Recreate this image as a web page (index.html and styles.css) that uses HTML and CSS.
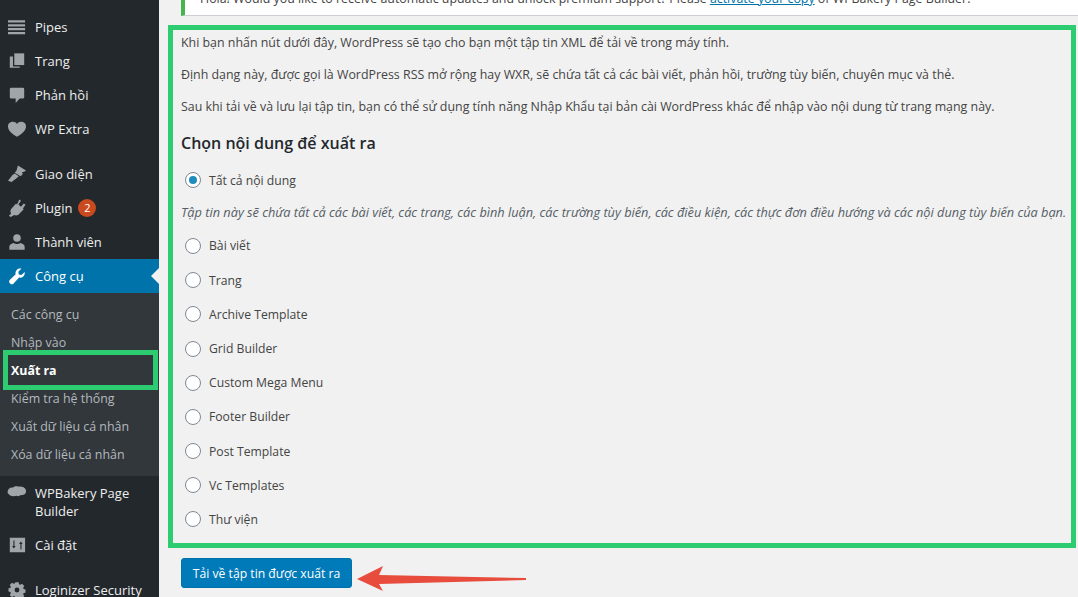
FILE: index.html
```html
<!DOCTYPE html>
<html lang="vi">
<head>
    <meta charset="UTF-8">
    <title>Xuất ra</title>
    <link rel="stylesheet" href="styles.css">
</head>
<body>
<div class="page">
    <nav class="sidebar">
        <a class="menu-item">
            <svg class="menu-icon" viewBox="0 0 20 20"><path d="M5 0h5v3H5zM14 0h5v3h-5z" transform="translate(0 5)"/></svg>
        </a>
        <a class="menu-item">
            <svg class="menu-icon" viewBox="0 0 20 20"><path d="M0 2.500h19v2.500H0zM0 7h19v2.500H0zM0 11h19v2.500H0zM0 15.500h19V18H0z"/></svg>
            <span>Pipes</span>
        </a>
        <a class="menu-item">
            <svg class="menu-icon" viewBox="0 0 20 20"><path d="M7 1.500h11v13H7z"/><path d="M5.500 5v11H13v1.500H2V5z"/></svg>
            <span>Trang</span>
        </a>
        <a class="menu-item">
            <svg class="menu-icon" viewBox="0 0 20 20"><path d="M3.500 2h13A1.500 1.500 0 0 1 18 3.500v9a1.500 1.500 0 0 1-1.500 1.500H13l-4.500 5v-5h-5A1.500 1.500 0 0 1 2 12.500v-9A1.500 1.500 0 0 1 3.500 2z"/></svg>
            <span>Phản hồi</span>
        </a>
        <a class="menu-item">
            <svg class="menu-icon" viewBox="0 0 20 20"><path d="M10 18.500C5 16 0 12 0 7 0 3.800 2.500 2 5.500 2 7.500 2 9 3 10 4.500 11 3 12.500 2 14.500 2 17.500 2 20 3.800 20 7c0 5-5 9-10 11.500z"/></svg>
            <span>WP Extra</span>
        </a>
        <div class="menu-sep"></div>
        <a class="menu-item">
            <svg class="menu-icon" viewBox="0 0 20 20"><path d="M11 .5l9 5.500-2 1.500-2.500.5 1 2-2.500 2.500-6.500-4L9.500 6zM7.500 9.500l4.500 3-1.500 1.500-6.500 5L0 17.500 5 11z"/></svg>
            <span>Giao diện</span>
        </a>
        <a class="menu-item">
            <svg class="menu-icon" viewBox="0 0 20 20"><path d="M12.500 .5l2 1.500-3 4 3 2.500 3-3.500 2 1.500-3 4 1 1-6 6c-1.500 1-3.500 1-4.500.3L3 20l-2-1.500 2.500-2.500C2.500 14.500 2.500 12.500 3.500 11L9 5l1 1z"/></svg>
            <span>Plugin</span>
            <span class="badge">2</span>
        </a>
        <a class="menu-item">
            <svg class="menu-icon" viewBox="0 0 20 20"><circle cx="10" cy="5.500" r="4.200"/><path d="M1.500 18.500v-3.500c0-2 2.500-3.500 5-4 1.500 1.500 5.500 1.500 7 0 2.500.5 5 2 5 4v3.500z"/></svg>
            <span>Thành viên</span>
        </a>
        <a class="menu-item active">
            <svg class="menu-icon" viewBox="0 0 20 20"><path d="M18.500 5.500c.4 2-.2 3.800-1.500 5-1.300 1.200-3 1.600-4.700 1.200L6 18.500c-.9.900-2.500.9-3.400 0l-.7-.7c-.9-.9-.9-2.500 0-3.400L8.500 8c-.5-1.800 0-3.500 1.200-4.800C11 1.900 13 1.300 15 1.800l-3.500 3.500.5 3 3 .5z"/></svg>
            <span>Công cụ</span>
        </a>
        <ul class="submenu">
            <li>Các công cụ</li>
            <li>Nhập vào</li>
            <li class="current">Xuất ra<span class="mark-box"></span></li>
            <li>Kiểm tra hệ thống</li>
            <li>Xuất dữ liệu cá nhân</li>
            <li>Xóa dữ liệu cá nhân</li>
        </ul>
        <a class="menu-item tall">
            <svg class="menu-icon bakery" viewBox="0 0 20 20"><path d="M-.500 9c0-3.500 3-5.500 6-5 1.500-1.500 4.500-2 6.500-1 2-.8 5.500 0 7 2 1.500 2 1.500 5-.5 6.500-1 .8-3 1-4.500.8-1 1.200-3 1.700-4.500.7-2 .8-5.500.8-7.500-.5C1 11.500-.500 10.500-.500 9z"/></svg>
            <span>WPBakery Page Builder</span>
        </a>
        <a class="menu-item">
            <svg class="menu-icon" viewBox="0 0 20 20"><path fill-rule="evenodd" d="M2 2h17v16H2zM6 5v6H4.500l2 3 2-3H7.200V5zM13.800 15V9h-1.500l2-3 2 3h-1.300v6z"/></svg>
            <span>Cài đặt</span>
        </a>
        <div class="menu-sep"></div>
        <a class="menu-item">
            <svg class="menu-icon" viewBox="0 0 20 20"><path fill-rule="evenodd" d="M8 1h4l.5 2.500 1.500.7 2.200-1.400 2.800 2.800-1.400 2.200.6 1.500 2.300.6v4l-2.300.5-.6 1.500 1.400 2.200-2.800 2.800-2.200-1.400-1.500.6L12 21H8l-.5-2.300-1.500-.6-2.200 1.400L1 16.700l1.400-2.200-.6-1.500L-.5 12.500v-4L1.800 8l.6-1.500L1 4.300l2.800-2.800L6 2.900l1.500-.6zM10 7.500a3 3 0 1 0 0 6 3 3 0 0 0 0-6z" transform="translate(1 .5) scale(.9)"/></svg>
            <span>Loginizer Security</span>
        </a>
    </nav>

    <main class="content">
        <div class="notice">
            <p>Hola! Would you like to receive automatic updates and unlock premium support? Please <a href="#">activate your copy</a> of WPBakery Page Builder.</p>
        </div>

        <div class="export-box">
            <p>Khi bạn nhấn nút dưới đây, WordPress sẽ tạo cho bạn một tập tin XML để tải về trong máy tính.</p>
            <p>Định dạng này, được gọi là WordPress RSS mở rộng hay WXR, sẽ chứa tất cả các bài viết, phản hồi, trường tùy biến, chuyên mục và thẻ.</p>
            <p>Sau khi tải về và lưu lại tập tin, bạn có thể sử dụng tính năng Nhập Khẩu tại bản cài WordPress khác để nhập vào nội dung từ trang mạng này.</p>
            <h2>Chọn nội dung để xuất ra</h2>
            <label class="choice"><span class="radio checked"></span>Tất cả nội dung</label>
            <p class="description">Tập tin này sẽ chứa tất cả các bài viết, các trang, các bình luận, các trường tùy biến, các điều kiện, các thực đơn điều hướng và các nội dung tùy biến của bạn.</p>
            <label class="choice"><span class="radio"></span>Bài viết</label>
            <label class="choice"><span class="radio"></span>Trang</label>
            <label class="choice"><span class="radio"></span>Archive Template</label>
            <label class="choice"><span class="radio"></span>Grid Builder</label>
            <label class="choice"><span class="radio"></span>Custom Mega Menu</label>
            <label class="choice"><span class="radio"></span>Footer Builder</label>
            <label class="choice"><span class="radio"></span>Post Template</label>
            <label class="choice"><span class="radio"></span>Vc Templates</label>
            <label class="choice"><span class="radio"></span>Thư viện</label>
        </div>

        <div class="submit-row">
            <button class="button-primary">Tải về tập tin được xuất ra</button>
            <svg class="arrow" width="170" height="34" viewBox="0 0 170 34"><path d="M0 21 L26 8 L22 17 L169 20 L169 22 L22 26 L26 33 Z"/></svg>
        </div>
    </main>
</div>
</body>
</html>
```

FILE: styles.css
```css
* {
    margin: 0;
    padding: 0;
    box-sizing: border-box;
}

html, body {
    height: 597px;
    overflow: hidden;
    background: #f1f1f1;
}

body {
    font-family: "Open Sans", "Noto Sans", sans-serif;
    font-size: 12.4px;
    color: #444;
}

.page {
    display: flex;
    margin-top: -24px;
}

/* Sidebar */
.sidebar {
    flex: 0 0 159px;
    background: #23282d;
    color: #eee;
}

.menu-item {
    display: flex;
    align-items: center;
    height: 34px;
    padding-left: 8px;
    font-size: 13px;
}

.menu-item.tall {
    height: 52px;
    line-height: 18px;
}

.menu-icon {
    flex: 0 0 18px;
    width: 18px;
    height: 18px;
    margin-right: 9px;
    fill: #a0a5aa;
    overflow: visible;
}

.menu-icon.bakery {
    align-self: flex-start;
    margin-top: 8px;
}

.menu-sep {
    height: 11px;
}

.menu-item.active {
    position: relative;
    background: #0073aa;
    color: #fff;
}

.menu-item.active .menu-icon {
    fill: #fff;
}

.menu-item.active::after {
    content: "";
    position: absolute;
    right: 0;
    top: 9px;
    border: 8px solid transparent;
    border-right-color: #f1f1f1;
}

.badge {
    width: 18px;
    height: 18px;
    margin-left: 6px;
    border-radius: 50%;
    background: #ca4a1f;
    color: #fff;
    font-size: 11px;
    line-height: 18px;
    text-align: center;
}

.submenu {
    list-style: none;
    padding: 8px 0 7px;
    background: #32373c;
    color: #b4b9be;
}

.submenu li {
    position: relative;
    height: 28px;
    padding-left: 11px;
    line-height: 28px;
}

.submenu .current {
    color: #fff;
    font-weight: 700;
}

/* green annotation round the current item */
.mark-box {
    position: absolute;
    left: 3px;
    right: 1px;
    top: -7px;
    bottom: -5px;
    border: 5px solid #2ecc71;
}

/* Main column */
.content {
    flex: 1;
    min-width: 0;
    padding: 24px 2px 0 9px;
}

.notice {
    height: 16px;
    margin-left: 13px;
    margin-right: -2px;
    padding-left: 15px;
    overflow: hidden;
    background: #fff;
    border-left: 4px solid #46b450;
    border-bottom: 1px solid #ccd0d4;
}

.notice p {
    margin-top: -10px;
    line-height: 18px;
}

.notice a {
    color: #0073aa;
}

.export-box {
    height: 523px;
    margin-top: 9px;
    padding: 4px 0 0 8px;
    border: 5px solid #2ecc71;
}

.export-box > p {
    margin-bottom: 14px;
    line-height: 18px;
}

.export-box h2 {
    margin-top: 15px;
    margin-bottom: 8px;
    font-size: 16px;
    font-weight: 600;
    line-height: 24px;
    color: #23282d;
}

.choice {
    display: flex;
    align-items: center;
    height: 34.2px;
    font-size: 12.2px;
}

.radio {
    width: 16px;
    height: 16px;
    margin: 0 8px 0 4px;
    border: 1px solid #7e8993;
    border-radius: 50%;
    background: #fff;
}

.radio.checked {
    display: flex;
    align-items: center;
    justify-content: center;
}

.radio.checked::before {
    content: "";
    width: 8px;
    height: 8px;
    border-radius: 50%;
    background: #1e8cbe;
}

.export-box .description {
    margin-top: 6px;
    margin-bottom: 7.7px;
    font-size: 12.75px;
    font-style: italic;
    white-space: nowrap;
    color: #555d66;
}

.submit-row {
    display: flex;
    align-items: flex-start;
    gap: 5px;
    margin-top: 10px;
    margin-left: 13px;
}

.button-primary {
    width: 171px;
    height: 30px;
    border: 1px solid #0073aa;
    border-radius: 3px;
    background: #007ab8;
    color: #fff;
    font-family: inherit;
    font-size: 12.2px;
}

.arrow {
    fill: #e74c3c;
}
```
